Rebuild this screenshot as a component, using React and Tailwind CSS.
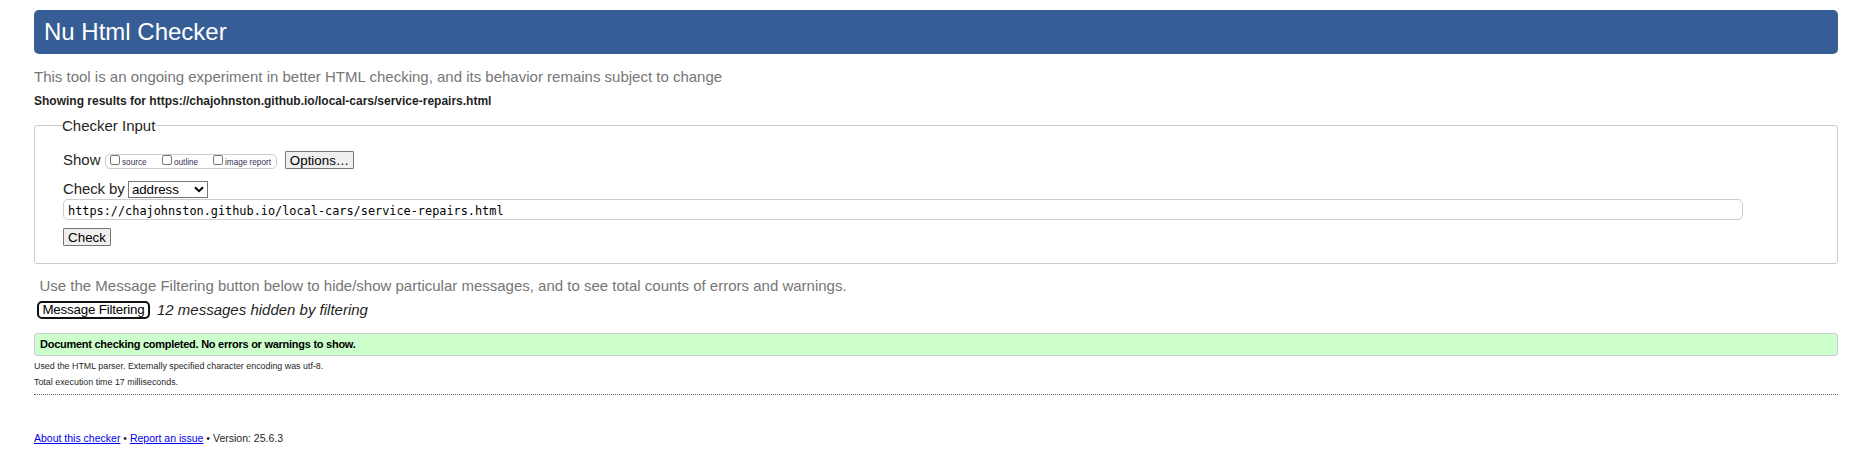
function Check({ label, className }) {
  return (
    <label className={`flex h-[13px] items-start text-[8.2px] leading-[15px] text-[#333355] ${className}`}>
      <span className="mr-[2px] h-[10px] w-[10px] shrink-0 rounded-[2px] border border-[#767676] bg-white" />
      <span className="whitespace-nowrap">{label}</span>
    </label>
  );
}

export default function App() {
  return (
    <div className="h-[455px] overflow-hidden bg-white pt-[10px] pr-[19px] pl-[34px] font-['Liberation_Sans',Arial,sans-serif] text-[#1f1f1f]">
      <header className="flex h-[44px] items-center rounded-[5px] bg-[#365d95] pl-[10px]">
        <h1 className="text-[24px] leading-[44px] text-white">Nu Html Checker</h1>
      </header>

      <p className="mt-[12px] h-[22px] text-[15px] leading-[22px] whitespace-nowrap text-[#767676]">
        This tool is an ongoing experiment in better HTML checking, and its behavior remains subject to change
      </p>
      <h2 className="mt-[4px] h-[18px] text-[12px] leading-[18px] font-bold whitespace-nowrap">
        Showing results for https://chajohnston.github.io/local-cars/service-repairs.html
      </h2>

      <fieldset className="mt-[5px] h-[149px] rounded-[3px] border border-[#cccccc] pl-[28px]">
        <legend className="-ml-[1px] h-[21px] text-[15px] leading-[22px]">Checker Input</legend>
        <div className="mt-[15px] flex h-[18px] items-start">
          <span className="w-[42px] text-[15px] leading-[18px] whitespace-nowrap">Show</span>
          <div className="mt-[3px] flex h-[15px] w-[172px] items-start rounded-[5px] border border-[#cccccc] pl-[4px]">
            <Check label="source" className="w-[52px]" />
            <Check label="outline" className="w-[51px]" />
            <Check label="image report" className="w-[60px]" />
          </div>
          <button className="ml-[8px] h-[18px] w-[69px] rounded-[1px] border border-[#767676] bg-[#efefef] text-[13.33px] leading-[18px] text-black">
            Options…
          </button>
        </div>
        <div className="mt-[12px] flex h-[17px] items-start">
          <span className="w-[65px] text-[15px] leading-[16px] tracking-[-0.1px] whitespace-nowrap">Check by</span>
          <div className="flex h-[17px] w-[80px] items-center justify-between border border-[#767676] bg-white pr-[3px] pl-[3px] text-[13.33px] leading-[15px] tracking-[-0.1px] text-black">
            <span>address</span>
            <svg width="10" height="7" viewBox="0 0 10 7" fill="none" stroke="#000" strokeWidth="2">
              <path d="M1 1.2 5 5.2 9 1.2" />
            </svg>
          </div>
        </div>
        <div className="mt-[1px] h-[21px] w-[1680px] rounded-[5px] border border-[#cccccc] pl-[4px] font-['DejaVu_Sans_Mono',monospace] text-[11.87px] leading-[23px] whitespace-nowrap text-black">
          https://chajohnston.github.io/local-cars/service-repairs.html
        </div>
        <button className="mt-[8px] block h-[18px] w-[48px] rounded-[1px] border border-[#767676] bg-[#efefef] text-[13.33px] leading-[18px] text-black">
          Check
        </button>
      </fieldset>

      <p className="mt-[11px] ml-[5.5px] h-[22px] text-[15px] leading-[22px] whitespace-nowrap text-[#767676]">
        Use the Message Filtering button below to hide/show particular messages, and to see total counts of errors and warnings.
      </p>
      <div className="mt-[4px] ml-[3px] flex h-[18px] items-start">
        <button className="h-[18px] w-[113px] rounded-[5px] border-2 border-[#101010] bg-white text-[13.33px] leading-[14px] tracking-[-0.18px] whitespace-nowrap text-black">
          Message Filtering
        </button>
        <span className="ml-[7px] text-[15px] leading-[18px] whitespace-nowrap italic">12 messages hidden by filtering</span>
      </div>

      <p className="mt-[14px] h-[23px] rounded-[3px] border border-[#cccccc] bg-[#ccffcc] pl-[5px] text-[11px] leading-[20px] font-bold tracking-[-0.26px] text-black">
        Document checking completed. No errors or warnings to show.
      </p>
      <p className="mt-[2px] h-[16px] text-[8.88px] leading-[16px]">
        Used the HTML parser. Externally specified character encoding was utf-8.
      </p>
      <p className="h-[16px] text-[8.88px] leading-[16px]">Total execution time 17 milliseconds.</p>
      <hr className="mt-[4px] border-t border-dotted border-[#666666]" />
      <p className="mt-[33px] h-[20px] text-[10.5px] leading-[20px]">
        <a className="text-[#0000ee] underline">About this checker</a> •{" "}
        <a className="text-[#0000ee] underline">Report an issue</a> • Version: 25.6.3
      </p>
    </div>
  );
}
